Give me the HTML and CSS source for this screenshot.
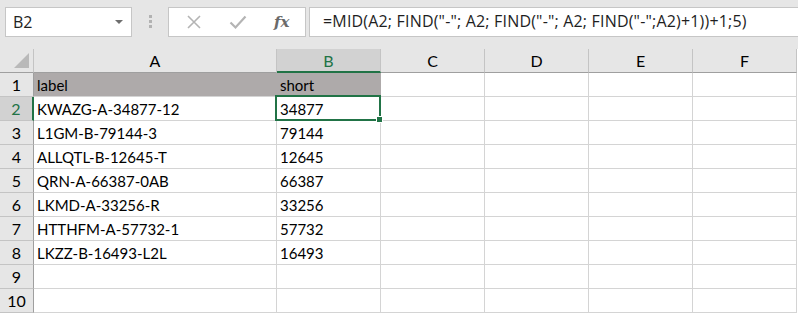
FILE: index.html
```html
<!DOCTYPE html>
<html lang="en">
  <head>
    <meta charset="UTF-8" />
    <title>Sheet</title>
    <link rel="stylesheet" href="styles.css">
  </head>
  <body>
    <div class="toolbar">
      <div class="name-box">
        <span>B2</span>
        <span class="caret"></span>
      </div>
      <div class="grip"><i></i><i></i><i></i></div>
      <div class="fx-buttons">
        <svg class="btn-icon" width="16" height="16" viewBox="0 0 16 16">
          <path d="M2 2 L14 14 M14 2 L2 14" stroke="#b4b4b4" stroke-width="1.6" fill="none" />
        </svg>
        <svg class="btn-icon" width="18" height="16" viewBox="0 0 18 16">
          <path d="M1.5 8.5 L6.5 13.5 L16.5 2.5" stroke="#b4b4b4" stroke-width="2.2" fill="none" />
        </svg>
        <span class="fx">fx</span>
      </div>
      <div class="formula">=MID(A2; FIND("-"; A2; FIND("-"; A2; FIND("-";A2)+1))+1;5)</div>
    </div>

    <div class="sheet">
      <div class="corner"><span class="tri"></span></div>
      <div class="col-head">A</div>
      <div class="col-head active">B</div>
      <div class="col-head">C</div>
      <div class="col-head">D</div>
      <div class="col-head">E</div>
      <div class="col-head">F</div>

      <div class="row-head">1</div>
      <div class="cell filled">label</div>
      <div class="cell filled">short</div>
      <div class="cell"></div><div class="cell"></div><div class="cell"></div><div class="cell"></div>

      <div class="row-head active">2</div>
      <div class="cell">KWAZG-A-34877-12</div>
      <div class="cell selected">34877<span class="sel-box"><span class="handle"></span></span></div>
      <div class="cell"></div><div class="cell"></div><div class="cell"></div><div class="cell"></div>

      <div class="row-head">3</div>
      <div class="cell">L1GM-B-79144-3</div>
      <div class="cell">79144</div>
      <div class="cell"></div><div class="cell"></div><div class="cell"></div><div class="cell"></div>

      <div class="row-head">4</div>
      <div class="cell">ALLQTL-B-12645-T</div>
      <div class="cell">12645</div>
      <div class="cell"></div><div class="cell"></div><div class="cell"></div><div class="cell"></div>

      <div class="row-head">5</div>
      <div class="cell">QRN-A-66387-0AB</div>
      <div class="cell">66387</div>
      <div class="cell"></div><div class="cell"></div><div class="cell"></div><div class="cell"></div>

      <div class="row-head">6</div>
      <div class="cell">LKMD-A-33256-R</div>
      <div class="cell">33256</div>
      <div class="cell"></div><div class="cell"></div><div class="cell"></div><div class="cell"></div>

      <div class="row-head">7</div>
      <div class="cell">HTTHFM-A-57732-1</div>
      <div class="cell">57732</div>
      <div class="cell"></div><div class="cell"></div><div class="cell"></div><div class="cell"></div>

      <div class="row-head">8</div>
      <div class="cell">LKZZ-B-16493-L2L</div>
      <div class="cell">16493</div>
      <div class="cell"></div><div class="cell"></div><div class="cell"></div><div class="cell"></div>

      <div class="row-head">9</div>
      <div class="cell"></div><div class="cell"></div>
      <div class="cell"></div><div class="cell"></div><div class="cell"></div><div class="cell"></div>

      <div class="row-head">10</div>
      <div class="cell"></div><div class="cell"></div>
      <div class="cell"></div><div class="cell"></div><div class="cell"></div><div class="cell"></div>
    </div>
  </body>
</html>
```

FILE: styles.css
```css
body {
  margin: 0;
  overflow: hidden;
  background-color: #ffffff;
  font-family: "Lato", "Open Sans", sans-serif;
}

.toolbar {
  display: flex;
  align-items: flex-start;
  height: 49px;
  padding: 7px 0 0 5px;
  box-sizing: border-box;
  background-color: #e6e6e6;
  white-space: nowrap;
}

.name-box {
  display: flex;
  align-items: center;
  justify-content: space-between;
  width: 127px;
  height: 30px;
  box-sizing: border-box;
  padding: 0 8px 0 7px;
  background-color: #ffffff;
  border: 1px solid #c6c6c6;
  font-family: "Open Sans", sans-serif;
  font-size: 16px;
  color: #222222;
}

.caret {
  width: 0;
  height: 0;
  border-left: 4px solid transparent;
  border-right: 4px solid transparent;
  border-top: 4px solid #6e6e6e;
}

.grip {
  display: flex;
  flex-direction: column;
  gap: 2px;
  margin: 8px 16px 0 17px;
}

.grip i {
  display: block;
  width: 3px;
  height: 3px;
  background-color: #b2b2b2;
}

.fx-buttons {
  display: flex;
  align-items: center;
  width: 138px;
  height: 30px;
  box-sizing: border-box;
  padding-left: 17px;
  background-color: #ffffff;
  border: 1px solid #c6c6c6;
}

.btn-icon {
  margin-right: 27px;
}

.fx {
  font-family: "DejaVu Serif", "Liberation Serif", serif;
  font-style: italic;
  font-weight: bold;
  font-size: 15px;
  color: #6a6a6a;
}

.formula {
  flex: 1;
  height: 30px;
  box-sizing: border-box;
  margin-left: 3px;
  padding: 2px 0 0 13px;
  background-color: #ffffff;
  border: 1px solid #c6c6c6;
  border-right: none;
  font-family: "Open Sans", sans-serif;
  font-size: 16px;
  letter-spacing: 0.18px;
  color: #1e1e1e;
}

.sheet {
  display: grid;
  grid-template-columns: 34px 243px repeat(5, 104px);
  grid-auto-rows: 24px;
  font-size: 15px;
  color: #000000;
}

.corner,
.col-head,
.row-head,
.cell {
  box-sizing: border-box;
  line-height: 24px;
}

.corner {
  position: relative;
  background-color: #e6e6e6;
  border-right: 1px solid #c4c4c4;
  border-bottom: 1px solid #9f9f9f;
}

.tri {
  position: absolute;
  right: 4px;
  bottom: 4px;
  width: 0;
  height: 0;
  border-left: 15px solid transparent;
  border-bottom: 15px solid #b9b9b9;
}

.col-head {
  text-align: center;
  font-size: 16px;
  background-color: #e6e6e6;
  border-right: 1px solid #c4c4c4;
  border-bottom: 1px solid #9f9f9f;
}

.col-head.active {
  background-color: #d2d2d2;
  color: #217346;
  border-bottom: 2px solid #217346;
}

.row-head {
  text-align: center;
  font-size: 16px;
  background-color: #e6e6e6;
  border-right: 1px solid #9f9f9f;
  border-bottom: 1px solid #c4c4c4;
}

.row-head.active {
  background-color: #d2d2d2;
  color: #217346;
  border-right: 2px solid #217346;
}

.cell {
  padding-left: 3px;
  border-right: 1px solid #d4d4d4;
  border-bottom: 1px solid #d4d4d4;
  white-space: nowrap;
  overflow: hidden;
}

.cell.filled {
  background-color: #aeaaaa;
  border-right-color: #aeaaaa;
}

.cell.selected {
  position: relative;
  overflow: visible;
}

.sel-box {
  position: absolute;
  left: -2px;
  top: -2px;
  right: -1px;
  bottom: -1px;
  border: 2px solid #217346;
}

.handle {
  position: absolute;
  right: -4px;
  bottom: -4px;
  width: 5px;
  height: 5px;
  background-color: #217346;
  border: 1px solid #ffffff;
}
```
